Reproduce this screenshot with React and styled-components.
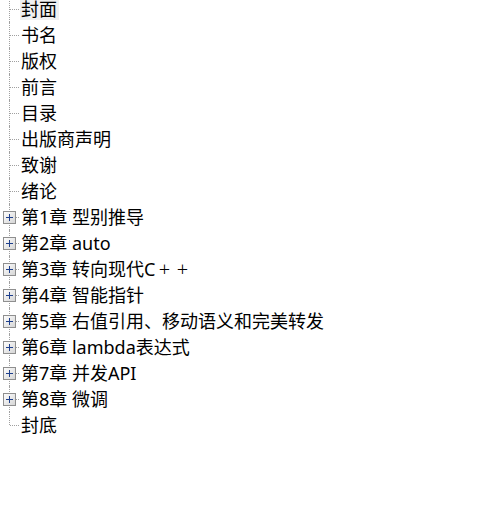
import { createGlobalStyle, styled } from "styled-components";

const GlobalStyle = createGlobalStyle`
    html, body {
        margin: 0;
        padding: 0;
        background: #fff;
    }

    body {
        font-family: "Noto Sans", "Noto Sans CJK SC", sans-serif;
        color: #000;
        overflow: hidden;
    }
`

const Tree = styled.ul`
    list-style: none;
    margin: -4px 0 0 0;
    padding: 0;
`

const Row = styled.li`
    height: 26px;
    display: flex;
    align-items: flex-start;
`

const Connector = styled.span`
    position: relative;
    width: 19px;
    height: 100%;
    flex: none;

    &::before {
        content: "";
        position: absolute;
        left: 9px;
        top: 0;
        height: ${props => props.$last ? "13px" : "100%"};
        border-left: 1px dotted #a0a0a0;
    }

    &::after {
        content: "";
        position: absolute;
        left: 10px;
        top: 13px;
        width: 9px;
        border-top: 1px dotted #a0a0a0;
    }
`

const Expander = styled.svg`
    position: absolute;
    left: 3px;
    top: 7px;
    z-index: 1;
`

const Label = styled.span`
    margin: 4px 0 0 1px;
    padding: 0 2px 0 1px;
    height: 20px;
    line-height: 18px;
    font-size: 18px;
    white-space: nowrap;
    background: ${props => props.$selected ? "#f0f0f0" : "transparent"};
`

// full-width plus: narrow glyph centred in an 18px cell
const Sym = styled.span`
    display: inline-block;
    width: 18px;
    text-align: center;
    font-size: 20px;
    font-weight: 300;
`

const PlusBox = () => (
    <Expander width="13" height="13" viewBox="0 0 13 13">
        <defs>
            <linearGradient id="plusFill" x1="0" y1="0" x2="1" y2="1">
                <stop offset="0" stopColor="#ffffff" />
                <stop offset="1" stopColor="#d4d4d4" />
            </linearGradient>
        </defs>
        <rect x="0.5" y="0.5" width="12" height="12" fill="url(#plusFill)" stroke="#8f8f8f" />
        <path d="M3 6.5h7M6.5 3v7" stroke="#1e3f8c" strokeWidth="1" />
    </Expander>
)

const items = [
    { key: "cover", title: "封面", selected: true },
    { key: "name", title: "书名" },
    { key: "copyright", title: "版权" },
    { key: "preface", title: "前言" },
    { key: "toc", title: "目录" },
    { key: "publisher", title: "出版商声明" },
    { key: "thanks", title: "致谢" },
    { key: "intro", title: "绪论" },
    { key: "ch1", title: "第1章 型别推导", folder: true },
    { key: "ch2", title: "第2章 auto", folder: true },
    { key: "ch3", title: <>第3章 转向现代C<Sym>+</Sym><Sym>+</Sym></>, folder: true },
    { key: "ch4", title: "第4章 智能指针", folder: true },
    { key: "ch5", title: "第5章 右值引用、移动语义和完美转发", folder: true },
    { key: "ch6", title: "第6章 lambda表达式", folder: true },
    { key: "ch7", title: "第7章 并发API", folder: true },
    { key: "ch8", title: "第8章 微调", folder: true },
    { key: "back", title: "封底" },
]

export default function App() {

    return (
        <>
            <GlobalStyle />

            <Tree>
                {items.map((item, i) => (
                    <Row key={item.key}>
                        <Connector $last={i === items.length - 1}>
                            {item.folder && <PlusBox />}
                        </Connector>
                        <Label $selected={item.selected}>{item.title}</Label>
                    </Row>
                ))}
            </Tree>
        </>
    )

}
